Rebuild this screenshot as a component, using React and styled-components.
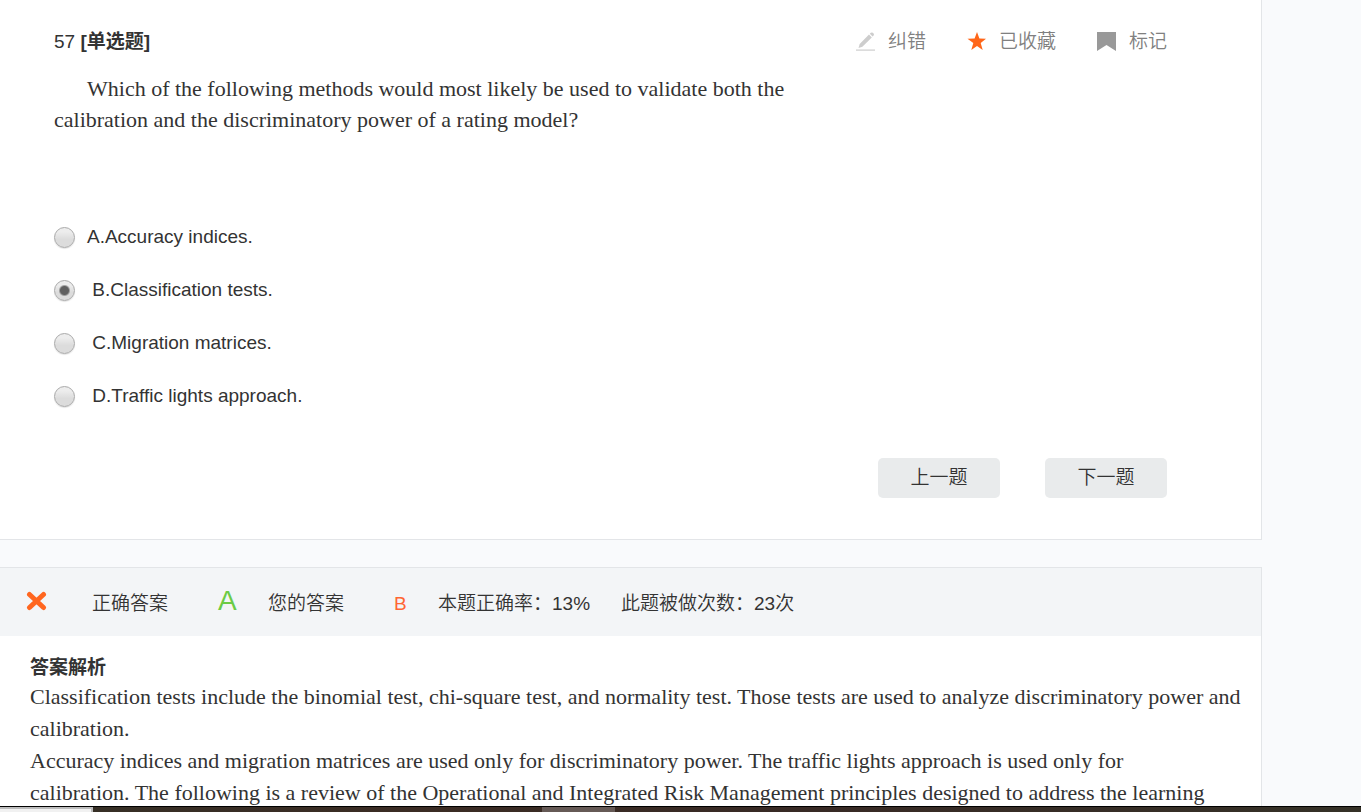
import React, { useState } from "react";
import styled, { createGlobalStyle } from "styled-components";

const sans = '"Liberation Sans", "Noto Sans CJK SC", sans-serif';
const serif = '"Liberation Serif", "Noto Sans CJK SC", serif';

const GlobalStyle = createGlobalStyle`
  * { box-sizing: border-box; }
  body {
    margin: 0;
    background: #f9fafc;
    color: #333;
    font: 350 19px/28px ${sans};
  }
  p, h1, h2, dl, dd { margin: 0; }
`;

const Screen = styled.div`
  display: flex;
  flex-direction: column;
  height: 100vh;
  overflow: hidden;
`;

const Content = styled.main`
  flex: 1;
  min-height: 0;
  overflow: hidden;
  margin-right: 99px;
`;

const Card = styled.section`
  background: #fff;
  border: solid #e3e5e8;
  border-width: 0 1px 1px 0;
`;

const QuestionCard = styled(Card)`
  padding: 28px 94px 41px 54px;
`;

const AnswerCard = styled(Card)`
  margin-top: 27px;
  border-top-width: 1px;
`;

const Header = styled.header`
  display: flex;
  justify-content: space-between;
  align-items: center;
`;

const Title = styled.h1`
  font-size: 19px;
  font-weight: 400;
`;

const Tools = styled.div`
  display: flex;
  gap: 40px;
`;

const ToolButton = styled.button`
  display: flex;
  align-items: center;
  gap: 13px;
  padding: 0;
  border: 0;
  background: none;
  color: #808080;
  font: inherit;
  cursor: pointer;

  svg {
    display: block;
    margin-bottom: 2px;
  }
`;

const Stem = styled.p`
  max-width: 740px;
  min-height: 137px;
  margin-top: 17px;
  font: 400 22px/31px ${serif};
  text-indent: 33px;
`;

const Options = styled.div`
  display: flex;
  flex-direction: column;
`;

const Option = styled.label`
  display: flex;
  align-items: center;
  gap: 12px;
  height: 53px;
  font-weight: 400;
  white-space: pre;
  cursor: pointer;
`;

const Radio = styled.input`
  appearance: none;
  width: 21px;
  height: 21px;
  margin: 2px 0 0;
  border: 1px solid #a9a9a9;
  border-radius: 50%;
  background: linear-gradient(#ededed 20%, #dcdcdc 60%);
  box-shadow: 0 1px 1px #e4e4e4;

  &:checked {
    background: radial-gradient(circle, #606060 4px, transparent 6px),
      linear-gradient(#ededed 20%, #dcdcdc 60%);
  }
`;

const Pager = styled.nav`
  display: flex;
  justify-content: flex-end;
  gap: 45px;
  margin-top: 36px;
`;

const PageButton = styled.button`
  width: 122px;
  height: 40px;
  padding: 0;
  border: 0;
  border-radius: 5px;
  background: #e9ebec;
  color: #333;
  font: inherit;
  cursor: pointer;
`;

const ResultBar = styled.dl`
  display: flex;
  align-items: center;
  height: 68px;
  padding: 4px 26px 0;
  background: #f3f5f7;
  white-space: nowrap;

  > svg { margin: 0 45px 6px 0; }
`;

const Term = styled.dt`
  min-width: ${(p) => p.$width || "0"};
`;

const CorrectChoice = styled.dd`
  width: 50px;
  margin-bottom: 6px;
  color: #6bcb45;
  font-size: 28px;
`;

const YourChoice = styled.dd`
  width: 44px;
  color: #ff6532;
`;

const Figure = styled.dd`
  width: 69px;
`;

const Analysis = styled.div`
  padding: 19px 16px 16px 30px;
`;

const AnalysisTitle = styled.h2`
  font: 700 19px/26px ${sans};
`;

const AnalysisText = styled.p`
  font: 400 22px/32px ${serif};
`;

const TaskBar = styled.footer`
  flex: none;
  display: flex;
  height: 6px;
  border-top: 1px solid #000;
  background: linear-gradient(90deg, #353026, #3b2c24 30%, #382a25 60%, #353127);
`;

const SearchBox = styled.div`
  width: 93px;
  border: solid #bcbcbc;
  border-width: 2px 2px 0 0;
  background: #f1f1f1;
`;

const ActiveWindow = styled.div`
  width: 73px;
  margin-left: 449px;
  background: #665a56;
`;

const PencilIcon = () => (
  <svg width="20" height="20" viewBox="0 0 20 20" fill="#cdcdcd" aria-hidden="true">
    <path d="M1 18.500h19v1.200H1z" />
    <path d="M3.500 17l1.200-4L14 3.600l2.800 2.800-9.400 9.300z" />
    <path d="M14.800 2.800l1-1q1-.8 2 0l.8.8q.8 1 0 2l-1 1z" />
  </svg>
);

const StarIcon = () => (
  <svg width="20" height="20" viewBox="0 0 20 20" fill="#ff6619" aria-hidden="true">
    <path d="M11 1l2.400 6.500 6.600.2-5.300 4.300 2 7-5.700-4.100L5.300 19l2-7L1.500 7.700l7.100-.2z" />
  </svg>
);

const BookmarkIcon = () => (
  <svg width="20" height="20" viewBox="0 0 20 20" fill="#999" aria-hidden="true">
    <path d="M1 1h19v19l-9.5-6L1 20z" />
  </svg>
);

const CrossIcon = () => (
  <svg width="21" height="20" viewBox="0 0 21 20" stroke="#ff661f" strokeWidth="5" strokeLinecap="round" aria-label="错误">
    <path d="M3.5 3.5l14 13M17.5 3.5l-14 13" />
  </svg>
);

const options = [
  ["A", "A.Accuracy indices."],
  ["B", " B.Classification tests."],
  ["C", " C.Migration matrices."],
  ["D", " D.Traffic lights approach."],
];

export default function App() {
  const [choice, setChoice] = useState("B");

  return (
    <>
      <GlobalStyle />
      <Screen>
        <Content>
          <QuestionCard>
            <Header>
              <Title>57 <b>[单选题]</b></Title>
              <Tools>
                <ToolButton type="button"><PencilIcon />纠错</ToolButton>
                <ToolButton type="button"><StarIcon />已收藏</ToolButton>
                <ToolButton type="button"><BookmarkIcon />标记</ToolButton>
              </Tools>
            </Header>
            <Stem>
              Which of the following methods would most likely be used to validate both the
              calibration and the discriminatory power of a rating model?
            </Stem>
            <Options role="radiogroup">
              {options.map(([value, text]) => (
                <Option key={value}>
                  <Radio
                    type="radio"
                    name="answer"
                    value={value}
                    checked={choice === value}
                    onChange={() => setChoice(value)}
                  />
                  <span>{text}</span>
                </Option>
              ))}
            </Options>
            <Pager>
              <PageButton type="button">上一题</PageButton>
              <PageButton type="button">下一题</PageButton>
            </Pager>
          </QuestionCard>

          <AnswerCard>
            <ResultBar>
              <CrossIcon />
              <Term $width="126px">正确答案</Term>
              <CorrectChoice>A</CorrectChoice>
              <Term $width="126px">您的答案</Term>
              <YourChoice>B</YourChoice>
              <Term>本题正确率：</Term>
              <Figure>13%</Figure>
              <Term>此题被做次数：</Term>
              <Figure>23次</Figure>
            </ResultBar>
            <Analysis>
              <AnalysisTitle>答案解析</AnalysisTitle>
              <AnalysisText>
                Classification tests include the binomial test, chi-square test, and normality test.
                Those tests are used to analyze discriminatory power and calibration.
              </AnalysisText>
              <AnalysisText>
                Accuracy indices and migration matrices are used only for discriminatory power. The
                traffic lights approach is used only for
                <br />
                calibration. The following is a review of the Operational and Integrated Risk
                Management principles designed to address the learning
              </AnalysisText>
            </Analysis>
          </AnswerCard>
        </Content>
        <TaskBar>
          <SearchBox />
          <ActiveWindow />
        </TaskBar>
      </Screen>
    </>
  );
}
